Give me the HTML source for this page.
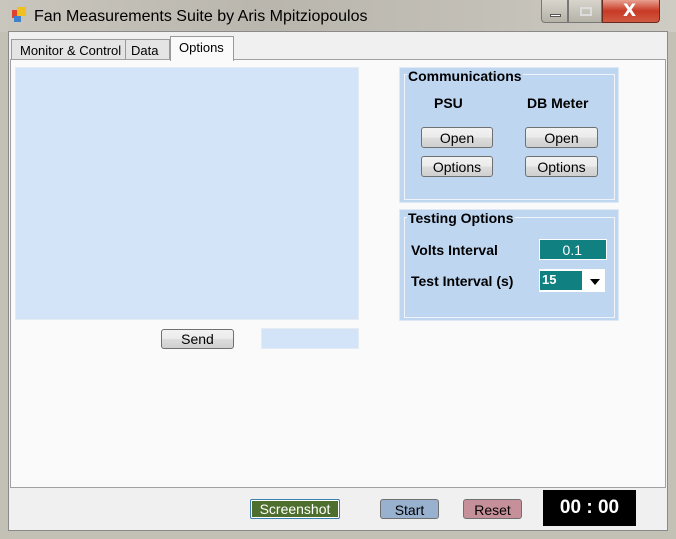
<!DOCTYPE html>
<html><head><style>
*{margin:0;padding:0;box-sizing:border-box}
body{width:676px;height:539px;background:#c3c0b6;position:relative;overflow:hidden;font-family:"Liberation Sans",sans-serif;font-size:13px;color:#000}
.a{position:absolute}
.btn{position:absolute;border:1px solid #707070;border-radius:3px;background:linear-gradient(#f2f2f2,#ebebeb 50%,#dddddd 51%,#cfcfcf);text-align:center;font-size:13px}
.grp{position:absolute;background:#bfd6f1;border:1px solid #dfe9f5}
.b{font-weight:bold;font-size:14px}
</style></head><body>
<div class="a" style="left:0;top:0;width:676px;height:32px;background:linear-gradient(90deg,#c9c6bd,#b9b6ad 40%,#c2bfb6 70%,#cfccc3)"></div>
<div class="a" style="left:12px;top:10px;width:8px;height:8px;background:#e04030"></div>
<div class="a" style="left:17px;top:7px;width:9px;height:9px;background:#f0c020"></div>
<div class="a" style="left:14px;top:16px;width:7px;height:6px;background:#4080d0"></div>
<div class="a" style="left:34px;top:8px;font-size:16px;color:#000">Fan Measurements Suite by Aris Mpitziopoulos</div>
<div class="a" style="left:541px;top:0;width:27px;height:23px;border:1px solid #777;border-top:0;border-radius:0 0 0 4px;background:linear-gradient(#d8d5cc,#b5b2a8)"></div>
<div class="a" style="left:550px;top:14px;width:11px;height:3px;background:#fff;border:1px solid #555"></div>
<div class="a" style="left:568px;top:0;width:34px;height:23px;border:1px solid #777;border-top:0;background:linear-gradient(#d8d5cc,#b5b2a8)"></div>
<div class="a" style="left:580px;top:7px;width:12px;height:9px;border:2px solid #ddd"></div>
<div class="a" style="left:602px;top:0;width:58px;height:23px;border:1px solid #6a2a20;border-top:0;border-radius:0 0 4px 0;background:linear-gradient(#e8a090,#c83a25 50%,#d05a40)"></div>
<div class="a" style="left:623px;top:1px;color:#fff;font-weight:bold;font-size:17px;font-family:'DejaVu Sans',sans-serif">X</div>
<div class="a" style="left:8px;top:31px;width:660px;height:500px;background:#f0f0f0;border:1px solid #8a8a8a"></div>
<div class="a" style="left:11px;top:39px;width:115px;height:21px;background:#e4e4e4;border:1px solid #9a9a9a;border-bottom:0;padding:3px 0 0 8px">Monitor &amp; Control</div>
<div class="a" style="left:125px;top:39px;width:45px;height:21px;background:#e4e4e4;border:1px solid #9a9a9a;border-bottom:0;padding:3px 0 0 5px">Data</div>
<div class="a" style="left:10px;top:59px;width:656px;height:429px;background:#fafafa;border:1px solid #a0a0a0"></div>
<div class="a" style="left:170px;top:36px;width:64px;height:25px;background:#fafafa;border:1px solid #9a9a9a;border-bottom:0;padding:3px 0 0 8px">Options</div>
<div class="a" style="left:15px;top:67px;width:344px;height:253px;background:#d3e3f8;border:1px solid #e4ebf4"></div>
<div class="btn" style="left:161px;top:329px;width:73px;height:20px;line-height:18px;font-size:14px">Send</div>
<div class="a" style="left:261px;top:328px;width:98px;height:21px;background:#d3e3f8;border:1px solid #e4ebf4"></div>
<div class="grp" style="left:399px;top:67px;width:220px;height:136px"></div>
<div class="a" style="left:404px;top:74px;width:211px;height:126px;border:1px solid #f0f4fa"></div>
<div class="a b" style="left:407px;top:68px;background:#bfd6f1;padding:0 1px">Communications</div>
<div class="a b" style="left:434px;top:95px">PSU</div>
<div class="a b" style="left:527px;top:95px">DB Meter</div>
<div class="btn" style="left:421px;top:127px;width:72px;height:21px;line-height:20px;font-size:14px">Open</div>
<div class="btn" style="left:525px;top:127px;width:73px;height:21px;line-height:20px;font-size:14px">Open</div>
<div class="btn" style="left:421px;top:156px;width:72px;height:21px;line-height:20px;font-size:14px">Options</div>
<div class="btn" style="left:525px;top:156px;width:73px;height:21px;line-height:20px;font-size:14px">Options</div>
<div class="grp" style="left:399px;top:209px;width:220px;height:112px"></div>
<div class="a" style="left:404px;top:217px;width:211px;height:101px;border:1px solid #f0f4fa"></div>
<div class="a b" style="left:407px;top:210px;background:#bfd6f1;padding:0 1px">Testing Options</div>
<div class="a b" style="left:411px;top:242px">Volts Interval</div>
<div class="a b" style="left:411px;top:273px">Test Interval (s)</div>
<div class="a" style="left:539px;top:239px;width:68px;height:21px;background:#108080;border:1px solid #fff;color:#fff;text-align:right;padding:2px 24px 0 0;font-size:14px">0.1</div>
<div class="a" style="left:539px;top:269px;width:66px;height:23px;background:#fff;border:1px solid #fff"></div>
<div class="a" style="left:540px;top:271px;width:42px;height:19px;background:#108080;color:#fff;padding:1px 0 0 2px;font-weight:bold">15</div>
<div class="a" style="left:590px;top:279px;width:0;height:0;border-left:5px solid transparent;border-right:5px solid transparent;border-top:6px solid #000"></div>
<div class="a" style="left:250px;top:499px;width:90px;height:20px;border:1px solid #3c7fb1;border-radius:2px;background:#fff;padding:1px"><div style="background:#4e6e2e;color:#fff;height:16px;text-align:center;line-height:16px;font-size:14px">Screenshot</div></div>
<div class="a" style="left:380px;top:499px;width:59px;height:20px;border:1px solid #707070;border-radius:3px;background:#97b1cf;text-align:center;line-height:21px;font-size:14px">Start</div>
<div class="a" style="left:463px;top:499px;width:59px;height:20px;border:1px solid #707070;border-radius:3px;background:#c6909a;text-align:center;line-height:21px;font-size:14px">Reset</div>
<div class="a" style="left:543px;top:490px;width:93px;height:36px;background:#000;color:#fff;font-weight:bold;font-size:19px;text-align:center;line-height:36px">00 : 00</div>
</body></html>
